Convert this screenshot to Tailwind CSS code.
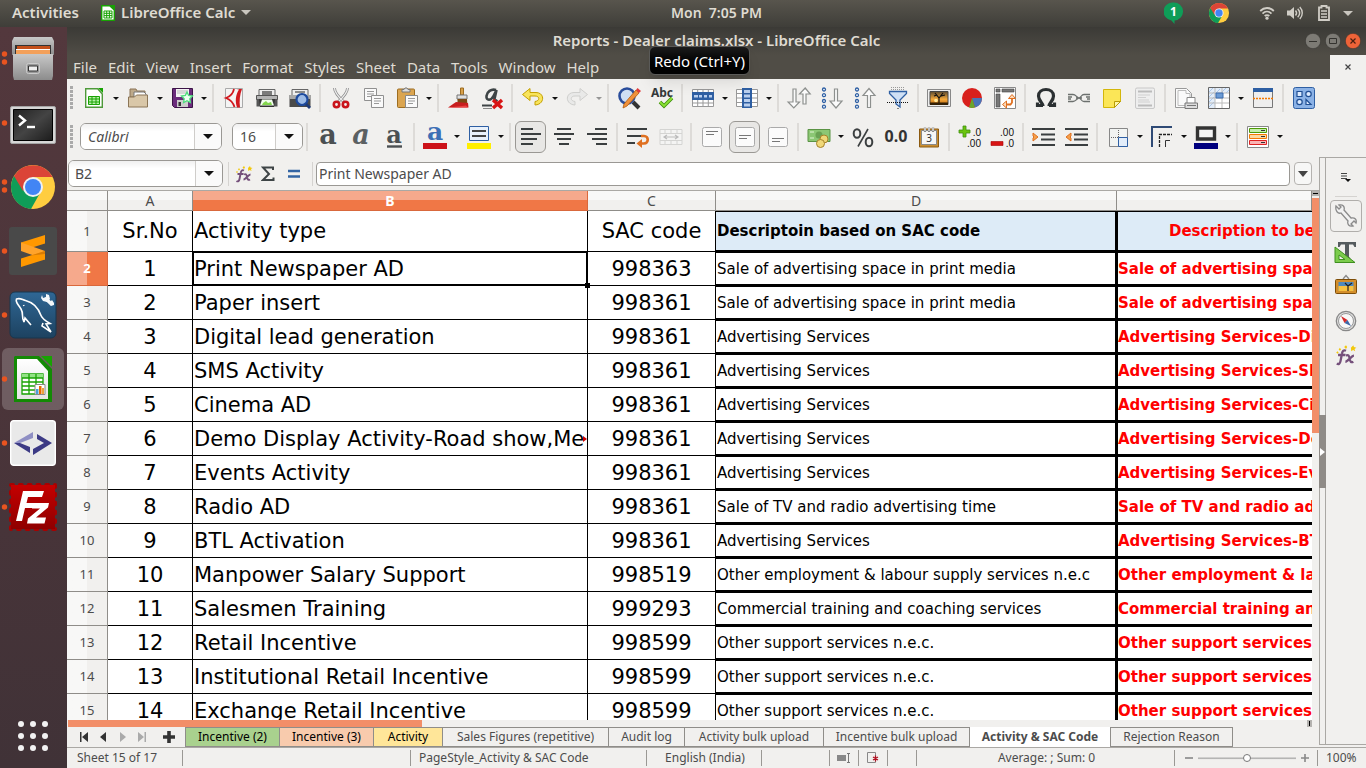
<!DOCTYPE html>
<html lang="en">
<head>
<meta charset="utf-8">
<title>Reports - Dealer claims.xlsx - LibreOffice Calc</title>
<script src="https://cdn.jsdelivr.net/npm/@tailwindcss/browser@4"></script>
</head>
<body class="flex h-screen flex-col overflow-hidden bg-[#f1f0ee] font-['Noto_Sans',sans-serif] text-sm text-[#4c4c4c]">

<!-- shared symbols -->
<svg class="absolute size-0" aria-hidden="true">
  <defs>
    <linearGradient id="gw" x2="0" y2="1"><stop stop-color="#fff"/><stop offset="1" stop-color="#e4e4e4"/></linearGradient>
    <linearGradient id="gf" x2="0" y2="1"><stop stop-color="#c8c8c8"/><stop offset="1" stop-color="#8c8c8c"/></linearGradient>
    <linearGradient id="gt" x2="1" y2="1"><stop stop-color="#222"/><stop offset=".5" stop-color="#444"/><stop offset="1" stop-color="#1c1c1c"/></linearGradient>
    <linearGradient id="gm" x2="0" y2="1"><stop stop-color="#2f6795"/><stop offset="1" stop-color="#1d4260"/></linearGradient>
    <linearGradient id="gs" x2="0" y2="1"><stop stop-color="#5b4a30"/><stop offset=".6" stop-color="#f5a93a"/><stop offset="1" stop-color="#c46a10"/></linearGradient>
    <linearGradient id="gz" x2="0" y2="1"><stop stop-color="#c40000"/><stop offset="1" stop-color="#8f0000"/></linearGradient>
  </defs>
  <symbol id="dn" viewBox="0 0 6 3"><path d="M0 0h6L3 3z" fill="#111"/></symbol>
  <symbol id="big" viewBox="0 0 10 5"><path d="M0 0h10L5 5z" fill="#111"/></symbol>
  <symbol id="grip" viewBox="0 0 3 24"><path d="M1.500 0v24" stroke="#aaa" stroke-width="3" stroke-dasharray="3 1"/></symbol>
  <symbol id="chrome" viewBox="0 0 48 48">
    <circle cx="24" cy="24" r="22" fill="#ffcd40"/>
    <path d="M5 13A22 22 0 0 0 22 46l9-16-7-6z" fill="#0f9d58"/>
    <path d="M43.500 14H24L14 28 5 13A22 22 0 0 1 43.500 14z" fill="#db4437"/>
    <circle cx="24" cy="24" r="10" fill="#f1f1f1"/><circle cx="24" cy="24" r="8" fill="#4285f4"/>
  </symbol>
  <symbol id="fx" viewBox="0 0 18 18">
    <path d="M9 5.500c-2-1-3 .500-3.300 2.500L4.500 14c-.4 2-1.500 3-3 2M2.500 9h6M9 9.500c2-1 2.500 0 3 2.500s1.200 3.500 3 2.500M15.500 9.500c-2 0-5 5-7 5" fill="none" stroke="#75507b" stroke-width="1.900"/>
    <path d="M3 4.500l1-1.500 1 1.500-1 1zM7.500 2.500L9 1l1 1.500L9 4zM13 3l2-2 .5 1.500 2 .5-1.500 1 .5 2-1.700-1-1.500 1zM1 7l1-1 1 1-1 1z" fill="#f2c80c"/>
  </symbol>
</svg>

<!-- desktop panel -->
<header class="flex h-[27px] shrink-0 items-center bg-linear-to-b from-[#58554d] to-[#3f3e39] pb-px text-sm font-semibold text-[#dfdbd2]">
  <div class="flex flex-1 items-center pr-20 text-[15px]">
    <button class="ml-3 w-[68px] text-left">Activities</button>
    <button class="ml-[21px] flex items-center gap-1.5">
      <svg class="h-4 w-3.5" viewBox="0 0 14 16"><path d="M.7.700h8L13.300 5v10.300H.700z" fill="#fff" stroke="#18a303" stroke-width="1.400"/><path d="M9 0h5v5z" fill="#18a303"/><path d="M3 6h8v7H3zM3 8.300h8M3 10.600h8M5.700 6v7M8.400 6v7" fill="#fff" stroke="#18a303"/></svg>
      <span>LibreOffice Calc</span>
      <svg class="h-[5px] w-2.5" viewBox="0 0 10 5"><path d="M0 0h10L5 5z" fill="#c9c6bf"/></svg>
    </button>
  </div>
  <button class="whitespace-pre">Mon  7:05 PM</button>
  <div class="flex flex-1 items-center justify-end pr-[13px]">
    <button class="mr-[25px]" aria-label="Hangouts"><svg class="h-[22px] w-[19px]" viewBox="0 0 19 22"><path d="M9.500.500a9 9 0 0 1 1 18v3.500l-3-3.600A9 9 0 0 1 9.500.500z" fill="#0f9d58"/><text x="9.500" y="14" font-size="12" font-weight="700" fill="#fff" text-anchor="middle">1</text></svg></button>
    <button class="mr-[29px]" aria-label="Chrome"><svg class="size-[22px]"><use href="#chrome"/></svg></button>
    <button class="mr-3" aria-label="Network"><svg class="h-3.5 w-4" viewBox="0 0 16 14" fill="none" stroke="#d0cdc6" stroke-width="1.800"><path d="M1.200 5c4-4 9.600-4 13.600 0M3.500 7.600c2.600-2.600 6.400-2.600 9 0M5.700 10c1.300-1.300 3.300-1.300 4.600 0"/><circle cx="8" cy="12.200" r="1.600" fill="#d0cdc6" stroke="none"/></svg></button>
    <button class="mr-[15px]" aria-label="Volume"><svg class="h-3.5 w-4" viewBox="0 0 16 14"><path d="M0 4.500h3L7 1v12L3 9.500H0z" fill="#d0cdc6"/><path d="M8.500 4.500c1.300 1.500 1.300 3.500 0 5M10.700 2.700c2.300 2.500 2.300 6 0 8.600M12.800 1c3.300 3.500 3.300 8.500 0 12" fill="none" stroke="#d0cdc6" stroke-width="1.400"/></svg></button>
    <button class="mr-[13px]" aria-label="Battery"><svg class="h-4 w-3" viewBox="0 0 12 16"><path d="M1 2.500h2.500V1h5v1.500H11V15H1z" fill="none" stroke="#d0cdc6" stroke-width="1.800"/><path d="M3 6h6M3 9h6M3 12h6" stroke="#d0cdc6" stroke-width="1.700"/></svg></button>
    <button aria-label="System menu"><svg class="h-[5px] w-2.5" viewBox="0 0 10 5"><path d="M0 0h10L5 5z" fill="#c9c6bf"/></svg></button>
  </div>
</header>

<div class="flex min-h-0 flex-1">
  <!-- dock -->
  <nav class="flex w-[67px] shrink-0 flex-col items-center bg-linear-to-b from-[#53383d] via-[#4b353a] to-[#403237] pr-px [&>button]:relative [&>button]:flex [&>button]:size-16 [&>button]:shrink-0 [&>button]:items-center [&>button]:justify-center">
    <button aria-label="Files"><svg class="absolute left-0 top-6 h-3.5 w-2" viewBox="0 0 8 14" fill="#e95420"><circle cx="3.500" cy="3" r="2.700"/><circle cx="3.500" cy="11" r="2.700"/></svg>
      <svg class="h-11 w-[42px]" viewBox="0 0 42 44"><path d="M2 0h38l2 4v14H0V4z" fill="url(#gf)"/><path d="M3 8h36v10H3z" fill="#333"/><path d="M5 9h33v8H5z" fill="#c4501b"/><path d="M4 12h34v6H4z" fill="#f3a05a"/><path d="M4 12.500h34" stroke="#fff" stroke-width="1"/><path d="M1 17h40v22l-1 4H2l-1-4z" fill="url(#gf)"/><rect x="14.500" y="26.500" width="13" height="10" rx="2" fill="#999" stroke="#ccc"/><path d="M16.500 29h9v5h-9z" fill="#eee" stroke="#333"/></svg></button>
    <button class="pt-1" aria-label="Terminal"><svg class="absolute left-0 top-6 h-3.5 w-2" viewBox="0 0 8 14" fill="#e95420"><circle cx="3.500" cy="8" r="2.700"/></svg>
      <svg class="h-[38px] w-[46px]" viewBox="0 0 46 38"><rect x=".5" y=".5" width="45" height="37" rx="1.500" fill="#d6d6d6" stroke="#a5a5a5"/><path d="M3.500 3.500h39v31h-39z" fill="url(#gt)" stroke="#000"/><path d="M9 9.500l6 5-6 5" fill="none" stroke="#fff" stroke-width="2.400"/><path d="M17 21h8" stroke="#fff" stroke-width="2.400"/></svg></button>
    <button aria-label="Chrome"><svg class="absolute left-0 top-6 h-3.5 w-2" viewBox="0 0 8 14" fill="#e95420"><circle cx="3.500" cy="3" r="2.700"/><circle cx="3.500" cy="11" r="2.700"/></svg>
      <svg class="size-12"><use href="#chrome"/></svg></button>
    <button aria-label="Sublime Text"><svg class="absolute left-0 top-6 h-3.5 w-2" viewBox="0 0 8 14" fill="#e95420"><circle cx="3.500" cy="8" r="2.700"/></svg>
      <svg class="size-12" viewBox="0 0 48 48"><rect width="48" height="48" rx="3" fill="#494949"/><path d="M12 15.500L36 8v8.500L12 24z" fill="#ff9800"/><path d="M12 24V15.500L36 24v8.500z" fill="#ffa32b"/><path d="M12 31.500L36 24v8.500L12 40z" fill="#ff9800"/><path d="M22 28.500L36 24v3z" fill="#d97c05"/></svg></button>
    <button aria-label="MySQL Workbench"><svg class="absolute left-0 top-6 h-3.5 w-2" viewBox="0 0 8 14" fill="#e95420"><circle cx="3.500" cy="8" r="2.700"/></svg>
      <svg class="size-12" viewBox="0 0 48 48"><rect x="1" y="1" width="46" height="46" rx="5" fill="url(#gm)" stroke="#19364e"/><path d="M15 31c-3-5 0-8-3-13C9 13 6 11 7.500 8c4-1.500 6 1 9 1.500 8 2 13 8 15.500 15 1 3 4 5 9 8l-4 .500 5 8-9-6 1-3M15 31l1-4 6 7M14.500 14l.500 1" fill="none" stroke="#fff" stroke-width="1.600"/><path d="M36 7l7 6.500" stroke="#f4f8fb" stroke-width="3.600"/><path d="M33 4l1 3 3-1V3l3 1 1 4-3 3-4-1-2-3zM40 12l3-3 2 3v2l-3 1z" fill="#f4f8fb"/></svg></button>
    <button aria-label="LibreOffice Calc"><span class="absolute inset-px rounded-md bg-white/20"></span><svg class="absolute left-0 top-6 h-3.5 w-2" viewBox="0 0 8 14" fill="#e95420"><circle cx="3.500" cy="8" r="2.700"/></svg>
      <svg class="relative h-12 w-10" viewBox="0 0 40 48"><path d="M2 1h24l13 13v33H1V2z" fill="#138a05"/><path d="M28 1h11v11z" fill="#18a303"/><path d="M4 4h20l11 12v28H4z" fill="url(#gw)"/><path d="M9 19h21v20H9z" fill="#fff" stroke="#18a303" stroke-width="1.300"/><path d="M9 19h21v4H9z" fill="#92e285"/><path d="M9 23h21M9 27h21M9 31h21M9 35h21M16 19v20M23 19v20" stroke="#18a303" stroke-width="1.300"/><path d="M22 29.500h10v10H22z" fill="#fff" stroke="#888"/><path d="M23 34h2.500v5H23z" fill="#4a9fd8"/><path d="M26 31h2.500v8H26z" fill="#e66a00"/><path d="M29 33h2v6h-2z" fill="#e8a33d"/></svg></button>
    <button aria-label="Code editor"><svg class="absolute left-0 top-6 h-3.5 w-2" viewBox="0 0 8 14" fill="#e95420"><circle cx="3.500" cy="8" r="2.700"/></svg>
      <svg class="size-[46px]" viewBox="0 0 46 46"><rect x=".7" y=".7" width="44.600" height="44.600" rx="3" fill="#e9e9e9" stroke="#fff" stroke-width="1.400"/><path d="M4 23L23 12v6l-13 5z" fill="#8f8fc4"/><path d="M4 23l6 0 10 4v6z" fill="#3c3a85"/><path d="M27 14l15 9-19 12v-6l11-6-7-4z" fill="#3c3a85"/></svg></button>
    <button aria-label="FileZilla"><svg class="absolute left-0 top-6 h-3.5 w-2" viewBox="0 0 8 14" fill="#e95420"><circle cx="3.500" cy="8" r="2.700"/></svg>
      <svg class="size-12" viewBox="0 0 48 48"><rect x="2" y="2" width="44" height="44" fill="none" stroke="#a80000" stroke-width="4" stroke-linecap="round" stroke-dasharray="2 6.800"/><rect x="2" y="2" width="44" height="44" fill="url(#gz)"/><path d="M14 8h21l-2 6H19l-1.500 6h10l-1.500 5H16l-3 13H7z" fill="#fff"/><path d="M24 20h16l-1 4.500-12 10h10l-1.500 6H18l1-5 12-10H23z" fill="#fff"/></svg></button>
    <button class="mt-auto" aria-label="Show applications"><svg class="size-8" viewBox="0 0 32 32" fill="#f2f2f2"><circle cx="4" cy="4" r="3"/><circle cx="16" cy="4" r="3"/><circle cx="28" cy="4" r="3"/><circle cx="4" cy="16" r="3"/><circle cx="16" cy="16" r="3"/><circle cx="28" cy="16" r="3"/><circle cx="4" cy="28" r="3"/><circle cx="16" cy="28" r="3"/><circle cx="28" cy="28" r="3"/></svg></button>
  </nav>

  <main class="flex min-w-0 flex-1 flex-col">
    <!-- title bar -->
    <div class="relative flex h-7 shrink-0 items-center justify-center bg-linear-to-b from-[#3b3a36] to-[#504d46]">
      <h1 class="text-[15px] font-semibold text-[#dfdbd2]">Reports - Dealer claims.xlsx - LibreOffice Calc</h1>
      <div class="absolute right-[5px] flex gap-1">
        <button aria-label="Minimize"><svg class="size-4" viewBox="0 0 16 16"><circle cx="8" cy="8" r="7.700" fill="#7d7b75" stroke="#34332f" stroke-width=".6"/><path d="M4 8.500h8" stroke="#34332f"/></svg></button>
        <button aria-label="Maximize"><svg class="size-4" viewBox="0 0 16 16"><circle cx="8" cy="8" r="7.700" fill="#7d7b75" stroke="#34332f" stroke-width=".6"/><path d="M4.500 5.500h7v5h-7z" fill="none" stroke="#34332f"/></svg></button>
        <button aria-label="Close"><svg class="size-4" viewBox="0 0 16 16"><circle cx="8" cy="8" r="7.700" fill="#ee6338" stroke="#34332f" stroke-width=".6"/><path d="M5.500 5.500l5 5M10.500 5.500l-5 5" stroke="#4a1f10" stroke-width="1.200"/></svg></button>
      </div>
      <div role="tooltip" class="absolute left-[582px] top-[19px] z-10 rounded-md border border-[#5a5a58] bg-linear-to-b from-[#1c1c1c] to-black px-1 pb-0.5 pt-[3px] text-[15px] leading-[22px] text-white shadow-lg">Redo (Ctrl+Y)</div>
    </div>
    <!-- menu bar -->
    <div class="flex h-6 shrink-0 items-center justify-between bg-[#504d46] pl-1.5">
      <div class="flex gap-[11px] pt-0.5 text-[15px] text-[#dfdbd2]" role="menubar">
        <button>File</button><button>Edit</button><button>View</button><button>Insert</button><button>Format</button><button>Styles</button><button>Sheet</button><button>Data</button><button>Tools</button><button>Window</button><button>Help</button>
      </div>
      <button class="flex h-6 w-9 items-center justify-center bg-[#f1f0ee]" aria-label="Close document"><svg class="size-1.5" viewBox="0 0 6 6"><path d="M.5.500l5 5M5.500.500l-5 5" stroke="#444" stroke-width="1.200"/></svg></button>
    </div>

    <!-- standard toolbar -->
    <div role="toolbar" aria-label="Standard" class="flex h-[39px] shrink-0 items-center overflow-hidden pb-px pl-[3px] [&>button]:flex [&>button]:h-8 [&>button]:w-[33px] [&>button]:shrink-0 [&>button]:items-center [&>button]:justify-center [&>button>svg]:size-6 [&>button>svg]:overflow-visible [&>button[data-drop]]:w-[11px] [&>button[data-drop]>svg]:h-[3px] [&>button[data-drop]>svg]:w-1.5 [&>hr]:mx-[3px] [&>hr]:h-7 [&>hr]:w-0.5 [&>hr]:shrink-0 [&>hr]:border-0 [&>hr]:bg-[#dddbd8]">
      <svg class="mr-1 h-6 w-[3px] shrink-0"><use href="#grip"/></svg>
      <button aria-label="New"><svg viewBox="0 0 24 24"><path d="M3.700 2.700h12L20.300 8v13.300H3.700z" fill="#fff" stroke="#4e9a3a" stroke-width="1.400"/><path d="M16 2h5v5z" fill="#18a303"/><path d="M6.500 10.500h11v8h-11zM6.500 13h11M6.500 16h11M10 10.500v8M14 10.500v8" fill="#b7f0a8" stroke="#18a303"/></svg></button>
      <button data-drop aria-label="New options"><svg><use href="#dn"/></svg></button>
      <button aria-label="Open"><svg viewBox="0 0 24 24"><path d="M4 3h6l1 2h8v6H4z" fill="#bda98a" stroke="#8b7556"/><path d="M8 6h10l2 2v6H8z" fill="#fff" stroke="#777"/><path d="M2.500 11h6l2-2h11v12h-19z" fill="#d9c7a8" stroke="#8b7556"/></svg></button>
      <button data-drop aria-label="Open options"><svg><use href="#dn"/></svg></button>
      <button aria-label="Save"><svg viewBox="0 0 24 24"><path d="M2.500 2.500h20v19h-18l-2-2z" fill="#6b2c7c" stroke="#3c1447"/><path d="M6 3h13v8H6z" fill="#f4f4f4"/><path d="M7 5h11M7 7h11" stroke="#bbb"/><path d="M7 14h11v7H7z" fill="#ccc"/><path d="M8.500 16h2.500v4H8.500z" fill="#333"/><path d="M17 6l1.600 3.400 3.900.600-2.700 2.700.6 3.800-3.400-1.800-3.400 1.800.6-3.800L11.500 10l3.900-.6z" fill="#effff2" stroke="#4fdd7d" stroke-width="1.300"/></svg></button>
      <button data-drop aria-label="Save options"><svg><use href="#dn"/></svg></button>
      <hr>
      <button aria-label="Export as PDF"><svg viewBox="0 0 24 24"><path d="M3.500 2.500h17v19h-17z" fill="#f4f4f4" stroke="#aaa"/><path d="M12 3c-1 5-4 7.500-8 9 4 1.500 7 4 8.500 9" fill="none" stroke="#d2191f" stroke-width="1.800"/><path d="M14.500 3h5.500c-2 5-3 12-2 18.500h-3C13 15 13.500 9 17 3.500z" fill="#d2191f"/></svg></button>
      <button aria-label="Print"><svg viewBox="0 0 24 24"><path d="M4 3.500h16v7H4z" fill="#eee" stroke="#666"/><path d="M7 6h10M7 8h10" stroke="#555" stroke-width="1.300"/><path d="M1.500 9.500h4v4h13v-4h4v11h-21z" fill="#555"/><path d="M1.500 9.500h21v4h-21z" fill="#b4b4b4" stroke="#555"/><path d="M4 13h16l-1 8H5z" fill="#333"/><path d="M7 13.500h10l2 6H5z" fill="#f4fff0"/><path d="M8 17l3-2 2 2 3-1 1 3H7z" fill="#83d64e"/></svg></button>
      <button aria-label="Print preview"><svg viewBox="0 0 24 24"><path d="M4 3.500h16v7H4z" fill="#eee" stroke="#666"/><path d="M7 6h10" stroke="#555" stroke-width="1.300"/><path d="M1.500 9h21v12h-21z" fill="#4a4a4a"/><path d="M1.500 9h21v4h-21z" fill="#a8a8a8"/><circle cx="14" cy="13.500" r="5.500" fill="#9dbbe6" stroke="#1d4a9e" stroke-width="2.200"/><path d="M18 18l4 4" stroke="#1d3a78" stroke-width="2.800"/></svg></button>
      <hr>
      <button aria-label="Cut"><svg viewBox="0 0 24 24"><path d="M5.500 2c0 3 4 9 9.500 14M18.500 2c0 3-4 9-9.500 14" fill="none" stroke="#8a8a8a" stroke-width="2.800"/><path d="M5.500 2c0 3 4 9 9.500 14M18.500 2c0 3-4 9-9.500 14" fill="none" stroke="#eee" stroke-width="1.300"/><circle cx="7.500" cy="18.500" r="2.700" fill="none" stroke="#c9141b" stroke-width="2.600"/><circle cx="16.500" cy="18.500" r="2.700" fill="none" stroke="#c9141b" stroke-width="2.600"/></svg></button>
      <button aria-label="Copy"><svg viewBox="0 0 24 24"><path d="M2.500 2.500h12v12h-12z" fill="#fafafa" stroke="#909090"/><path d="M5 5.500h7M5 8h7M5 10.500h5" stroke="#999"/><path d="M9.500 9.500h12v12h-12z" fill="#fafafa" stroke="#909090"/><path d="M12 12.500h7M12 15h7M12 17.500h5" stroke="#999"/></svg></button>
      <button aria-label="Paste"><svg viewBox="0 0 24 24"><rect x="2.500" y="3" width="17" height="18.500" rx="1" fill="#dba550" stroke="#9d6d20"/><path d="M7 6V3.500h2L10 2h2l1 1.500h2V6z" fill="#ddd" stroke="#777"/><path d="M10.500 9.500h12v12h-12z" fill="#fafafa" stroke="#888"/><path d="M13 12.500h7M13 15h7M13 17.500h5" stroke="#999"/></svg></button>
      <button data-drop aria-label="Paste options"><svg><use href="#dn"/></svg></button>
      <hr>
      <button aria-label="Clone formatting"><svg viewBox="0 0 24 24"><path d="M13.500 2h3v7h-3z" fill="#d8a04a" stroke="#9d6d20"/><path d="M10 9h10v4H10z" fill="#e0e0e0" stroke="#777"/><path d="M10.500 13h9.500l.5 7-10 1z" fill="#7c4a14"/><path d="M9 16l12 1 .5 4.500H1z" fill="#c81e1e"/><path d="M1 21.500h20l-2-2-8 1z" fill="#ee4444"/></svg></button>
      <button aria-label="Clear formatting"><svg viewBox="0 0 24 24"><path d="M16 4c-5-1.500-9 2-9.500 6-.5 5 4.500 5 7 0l3-6-2 9c-.3 2 1 2.500 3 1" fill="none" stroke="#3e4446" stroke-width="2.600"/><path d="M2 19.500h10" stroke="#3e4446" stroke-width="2"/><path d="M3 22.500h9" stroke="#888"/><path d="M13 14l9 8M22 14l-9 8" stroke="#d81414" stroke-width="3.400"/></svg></button>
      <hr>
      <button aria-label="Undo"><svg viewBox="0 0 24 24"><path d="M9 2.500v4h6c9 0 9 12-1 12.500v-3.500c5-.5 5-5.500 0-5.500H9v4.500L1.500 8.500z" fill="#f8e45c" stroke="#c4a000"/></svg></button>
      <button data-drop aria-label="Undo list"><svg><use href="#dn"/></svg></button>
      <button aria-label="Redo"><svg viewBox="0 0 24 24"><path d="M15 2.500v4H9C0 6.500 0 18.500 10 19v-3.500c-5-.5-5-5.500 0-5.500h5v4.500l7.500-6z" fill="#e9e9e8" stroke="#cfcfcd"/></svg></button>
      <button data-drop aria-label="Redo list"><svg class="opacity-40"><use href="#dn"/></svg></button>
      <hr>
      <button aria-label="Find and replace"><svg viewBox="0 0 24 24"><path d="M16 16l6 6" stroke="#333" stroke-width="4"/><circle cx="10" cy="10" r="7.500" fill="#cfdef3" stroke="#2a4d9b" stroke-width="2.600"/><path d="M6 22l1-4L19 4l3 3L10 20z" fill="#f0913a" stroke="#b35b0d" stroke-width=".8"/><path d="M19 4l1.500-2 3.500 3-2 2z" fill="#e03c3c"/></svg></button>
      <button aria-label="Spelling"><svg viewBox="0 0 24 24"><text x="12" y="11" font-size="12" font-weight="700" fill="#34393b" text-anchor="middle">Abc</text><path d="M10 16l4 4L22 12" fill="none" stroke="#3f8f0f" stroke-width="3.600"/><path d="M10 16l4 4L22 12" fill="none" stroke="#8ae234" stroke-width="1.800"/></svg></button>
      <hr>
      <button aria-label="Rows"><svg viewBox="0 0 24 24"><path d="M1.500 3.500h21v17h-21zM1.500 17h21M6.700 3v17M12 3v17M17.300 3v17" fill="#fff" stroke="#999"/><path d="M1 6h22v8H1z" fill="#2e5fa3"/><path d="M3 9h4v2.500H3zM8 9h3v2.500H8zM13 9h3v2.500h-3zM18 9h3v2.500h-3z" fill="#b9cfee"/></svg></button>
      <button data-drop aria-label="Row options"><svg><use href="#dn"/></svg></button>
      <button aria-label="Columns"><svg viewBox="0 0 24 24"><path d="M1.500 3.500h21v17h-21zM1 7.500h22M1 12h22M1 16.500h22" fill="#fff" stroke="#999"/><path d="M7 2h10v20H7z" fill="#2e5fa3"/><path d="M9 4h6v3H9zM9 8.500h6v3H9zM9 13h6v3H9zM9 17.500h6v3H9z" fill="#b9cfee"/></svg></button>
      <button data-drop aria-label="Column options"><svg><use href="#dn"/></svg></button>
      <hr>
      <button aria-label="Sort"><svg viewBox="0 0 24 24" fill="#fbfbfb" stroke="#8d908e" stroke-width="1.200"><path d="M6 3h3v13h3.500l-5.700 6-5.700-6H6zM16 18V8h-3.500l5.700-6 5 6H19v10z"/></svg></button>
      <button aria-label="Sort descending"><svg viewBox="0 0 24 24"><path d="M14.500 3h3v12H22l-6 7-6-7h4.500z" fill="#fbfbfb" stroke="#8d908e" stroke-width="1.200"/><g fill="#fff" stroke="#2e5fa3" stroke-width="1.300"><circle cx="4" cy="3.500" r="1.500"/><circle cx="4" cy="9.200" r="1.500"/><circle cx="4" cy="15" r="1.500"/><circle cx="4" cy="20.700" r="1.500"/></g></svg></button>
      <button aria-label="Sort ascending"><svg viewBox="0 0 24 24"><path d="M14.500 21.500h3v-12H22l-6-7-6 7h4.500z" fill="#fbfbfb" stroke="#8d908e" stroke-width="1.200"/><g fill="#fff" stroke="#2e5fa3" stroke-width="1.300"><circle cx="4" cy="3.500" r="1.500"/><circle cx="4" cy="9.200" r="1.500"/><circle cx="4" cy="15" r="1.500"/><circle cx="4" cy="20.700" r="1.500"/></g></svg></button>
      <button aria-label="AutoFilter"><svg viewBox="0 0 24 24"><path d="M5 1.500h14M5 3.500h14" stroke="#999" stroke-dasharray="1 1"/><path d="M3.500 5.500h17v2L14 14v7l-4-3v-4L3.500 7.500z" fill="#cfe0f5" stroke="#2e5fa3" stroke-width="1.300"/><path d="M1 16.500h22" stroke="#111" stroke-dasharray="1 1"/><path d="M12 22v1" stroke="#111"/></svg></button>
      <hr>
      <button aria-label="Insert image"><svg viewBox="0 0 24 24"><path d="M.5 3.500h23v17H.5z" fill="#eee" stroke="#888"/><path d="M3 5.500h18v13H3z" fill="url(#gs)" stroke="#444"/><path d="M12 18v-6L8 7M12 12l4-5M14 10l4-1M10 9L7 10" fill="none" stroke="#111" stroke-width="1.200"/><circle cx="9" cy="14.500" r="1.800" fill="#ffe89a"/><path d="M3 16.500h18v2.500H3z" fill="#332005"/></svg></button>
      <button aria-label="Insert chart"><svg viewBox="0 0 24 24"><circle cx="12" cy="12" r="10" fill="#d8201c"/><path d="M12 12h10a10 10 0 0 1-7 9.600z" fill="#4a74b8"/><path d="M12 12l3 9.600a10 10 0 0 1-6 0z" fill="#69a62c"/></svg></button>
      <button aria-label="Insert pivot table"><svg viewBox="0 0 24 24"><path d="M1.500 1.500h21v21h-21z" fill="#fff" stroke="#888"/><path d="M3 3h4v3H3zM9 3h12v3H9zM3 8h4v13H3z" fill="#777" stroke="#444" stroke-width=".6"/><path d="M13 18.500h4.500l1.500-2V12" fill="none" stroke="#df7020" stroke-width="1.800"/><path d="M9.500 18.500l4-3.500v7zM15.500 12.500l3.500-4 3.500 4z" fill="#fbd9b8" stroke="#df7020"/></svg></button>
      <hr>
      <button aria-label="Special character"><svg viewBox="0 0 24 24"><path d="M9 19.500H3.500v-3M9 20c0-3-4.500-5-4.500-10C4.500 6 8 3.500 12 3.500S19.500 6 19.500 10c0 5-4.500 7-4.500 10M15 19.500h5.500v-3" fill="none" stroke="#2b3032" stroke-width="3.200"/></svg></button>
      <button aria-label="Hyperlink"><svg viewBox="0 0 24 24" fill="none" stroke="#6c706e" stroke-width="1.300"><path d="M1 8.500h5c3 0 3 2.500 6 3.500s2 3.500 5 3.500h6M1 15.500h5c3 0 3-2.500 6-3.500s2-3.500 5-3.500h6M9 12h6M1 11h4M1 13h3M19 11h4M20 13h3"/></svg></button>
      <button aria-label="Comment"><svg viewBox="0 0 24 24"><path d="M3.500 3.500h17v12l-6 6h-11z" fill="#fbe657" stroke="#d3b60b"/><path d="M20.500 15.500h-6v6z" fill="#fff6a8" stroke="#b89c05"/></svg></button>
      <button aria-label="Headers and footers"><svg viewBox="0 0 24 24"><rect x="2.500" y="2" width="19" height="20.500" rx="1.500" fill="#eee" stroke="#c8c8c8"/><path d="M5 5.500h14M5 19.500h14" stroke="#bbb" stroke-width="2"/><path d="M5 9h12M5 11.500h8M5 14h11M5 16h12" stroke="#d0d0d0"/></svg></button>
      <hr>
      <button aria-label="Print area"><svg viewBox="0 0 24 24"><path d="M1.500 2.500h11l5 5v14h-16z" fill="#fafafa" stroke="#999"/><path d="M4 4.500h8v3h4v12H4z" fill="none" stroke="#bbb"/><path d="M13 11.500h8v6h-8z" fill="#fff" stroke="#888"/><path d="M11 17h12.500v5.500H11z" fill="#ddd" stroke="#777"/><path d="M13 19.500h9" stroke="#777"/></svg></button>
      <button aria-label="Freeze rows and columns"><svg viewBox="0 0 24 24"><path d="M1.500 1.500h21v21h-21z" fill="#fff" stroke="#666"/><path d="M2 2h20v5H2zM2 7h6v15H2z" fill="#e3edf9"/><path d="M2 6l4-4M2 11l5-5M2 16l5-5M2 21l5-5M9 7l4-4M14 7l5-5M19 7l3-3" stroke="#9dbce4" stroke-width=".8"/><path d="M2 7h20M2 12h20M2 17h20M8 2v20M15 2v20" stroke="#bbb"/><path d="M9 7h7v5H9z" fill="#6b9bd6" stroke="#3c6cae"/></svg></button>
      <button data-drop aria-label="Freeze options"><svg><use href="#dn"/></svg></button>
      <button aria-label="Split window"><svg viewBox="0 0 24 24"><path d="M2.500 2.500h19v19h-19z" fill="#eee" stroke="#777"/><path d="M2 2h20v4H2z" fill="#2e5fa3"/><path d="M2 12.500h20" stroke="#f57900" stroke-width="1.300" stroke-dasharray="2 1"/></svg></button>
      <hr>
      <button aria-label="Show draw functions"><svg viewBox="0 0 24 24"><rect x="1.500" y="1.500" width="21" height="21" rx="2" fill="#8bb2e6" stroke="#2e5fa3"/><g fill="#dcebff" stroke="#1f4e93" stroke-width="1.200"><path d="M5 5.500h5v5H5z"/><circle cx="16.500" cy="8" r="2.700"/><circle cx="7.500" cy="16" r="2.700"/><path d="M14 13.500v5h5z"/></g></svg></button>
    </div>

    <!-- formatting toolbar -->
    <div role="toolbar" aria-label="Formatting" class="flex h-[39px] shrink-0 items-center overflow-hidden pb-0.5 pl-[3px] [&>button]:flex [&>button]:h-8 [&>button]:w-[33px] [&>button]:shrink-0 [&>button]:items-center [&>button]:justify-center [&>button>svg]:size-6 [&>button>svg]:overflow-visible [&>button[data-drop]]:w-[11px] [&>button[data-drop]>svg]:h-[3px] [&>button[data-drop]>svg]:w-1.5 [&>button[aria-pressed]]:w-[31px] [&>button[aria-pressed]]:mx-px [&>button[aria-pressed]]:rounded-md [&>button[aria-pressed]]:border [&>button[aria-pressed]]:border-[#9a9894] [&>button[aria-pressed]]:bg-[#e8e7e5] [&>hr]:mx-[3px] [&>hr]:h-7 [&>hr]:w-0.5 [&>hr]:shrink-0 [&>hr]:border-0 [&>hr]:bg-[#dddbd8]">
      <svg class="mr-[7px] h-6 w-[3px] shrink-0"><use href="#grip"/></svg>
      <div class="mr-2.5 flex h-[27px] w-[142px] shrink-0 overflow-hidden rounded-md border border-[#9a9894] bg-white">
        <input aria-label="Font name" value="Calibri" class="w-28 min-w-0 flex-1 bg-linear-to-b from-[#f0f0f0] to-white to-30% pl-[7px] italic outline-none">
        <button aria-label="Font list" class="flex w-[27px] items-center justify-center border-l border-[#cfcdca] bg-[#fafafa]"><svg class="h-[5px] w-2.5"><use href="#big"/></svg></button>
      </div>
      <div class="flex h-[27px] w-[71px] shrink-0 overflow-hidden rounded-md border border-[#9a9894] bg-white">
        <input aria-label="Font size" value="16" class="w-10 min-w-0 flex-1 bg-linear-to-b from-[#f0f0f0] to-white to-30% pl-[7px] outline-none">
        <button aria-label="Font size list" class="flex w-[27px] items-center justify-center border-l border-[#cfcdca] bg-[#fafafa]"><svg class="h-[5px] w-2.5"><use href="#big"/></svg></button>
      </div>
      <hr>
      <button aria-label="Bold"><svg viewBox="0 0 24 24"><text x="12" y="19" font-family="DejaVu Serif" font-size="27" font-weight="700" fill="#4b5052" text-anchor="middle">a</text></svg></button>
      <button aria-label="Italic"><svg viewBox="0 0 24 24"><text x="12" y="19" font-family="DejaVu Serif" font-size="27" font-weight="700" font-style="italic" fill="#5b6062" text-anchor="middle">a</text></svg></button>
      <button aria-label="Underline"><svg viewBox="0 0 24 24"><text x="12" y="18" font-family="DejaVu Serif" font-size="24" font-weight="700" fill="#4b5052" text-anchor="middle">a</text><path d="M5 21.500h15" stroke="#4b5052" stroke-width="2.400"/></svg></button>
      <hr>
      <button aria-label="Font color"><svg viewBox="0 0 24 24"><text x="12" y="15" font-family="DejaVu Serif" font-size="25" font-weight="700" fill="#3c6fb5" text-anchor="middle">a</text><path d="M0 18h24v6H0z" fill="#cc1219"/></svg></button>
      <button data-drop aria-label="Font colors"><svg><use href="#dn"/></svg></button>
      <button aria-label="Highlighting"><svg viewBox="0 0 24 24"><path d="M2.500 1.500h19v14h-19z" fill="#e9f1fb" stroke="#2e5fa3"/><path d="M5 6h14M5 11h14" stroke="#444" stroke-width="2"/><path d="M0 18h24v6H0z" fill="#ffef00"/></svg></button>
      <button data-drop aria-label="Highlighting colors"><svg><use href="#dn"/></svg></button>
      <hr>
      <button aria-label="Align left" aria-pressed="true"><svg viewBox="0 0 24 24"><path d="M2 4h12M2 9h20M2 14h16M2 19h12" stroke="#3b3f40" stroke-width="2"/></svg></button>
      <button aria-label="Center"><svg viewBox="0 0 24 24"><path d="M5 4h14M2 9h20M5 14h14M7 19h10" stroke="#3b3f40" stroke-width="2"/></svg></button>
      <button aria-label="Align right"><svg viewBox="0 0 24 24"><path d="M10 4h12M2 9h20M7 14h15M11 19h11" stroke="#3b3f40" stroke-width="2"/></svg></button>
      <hr>
      <button aria-label="Wrap text"><svg viewBox="0 0 24 24"><path d="M1 4h20M1 11h14M1 18h8" stroke="#3b3f40" stroke-width="2"/><path d="M15 11h3c5 0 5 7.500 0 7.500h-3" fill="none" stroke="#df7020" stroke-width="2.600"/><path d="M10.500 18.500l5.500-4.500v9z" fill="#df7020"/></svg></button>
      <button aria-label="Merge cells"><svg viewBox="0 0 24 24"><path d="M1 4.500h22v15H1zM1 8.500h22M1 15.500h22M6 4v4M12 4v4M18 4v4M6 16v4M12 16v4M18 16v4" fill="#f4f4f3" stroke="#d4d4d2"/><path d="M6 12h12M8 10l-3 2 3 2M16 10l3 2-3 2" fill="none" stroke="#bbb" stroke-width="1.200"/></svg></button>
      <hr>
      <button aria-label="Align top"><svg viewBox="0 0 24 24"><rect x="2.500" y="2.500" width="19" height="19" rx="2" fill="#fbfbfb" stroke="#aaa"/><path d="M6 6.500h12M6 9.500h8" stroke="#777"/></svg></button>
      <button aria-label="Center vertically" aria-pressed="true"><svg viewBox="0 0 24 24"><rect x="2.500" y="2.500" width="19" height="19" rx="2" fill="#fbfbfb" stroke="#aaa"/><path d="M6 10.500h12M6 13.500h8" stroke="#777"/></svg></button>
      <button aria-label="Align bottom"><svg viewBox="0 0 24 24"><rect x="2.500" y="2.500" width="19" height="19" rx="2" fill="#fbfbfb" stroke="#aaa"/><path d="M6 13.500h12M6 16.500h8" stroke="#777"/></svg></button>
      <hr>
      <button aria-label="Currency"><svg viewBox="0 0 24 24"><path d="M1 4.500h22v12H1z" fill="#8cc774" stroke="#5a9344"/><circle cx="12" cy="10" r="3.500" fill="#6aa253"/><path d="M3 7h4M3 13h4" stroke="#c5e8b5" stroke-width="1.500"/><circle cx="17" cy="14" r="4" fill="#f0d878" stroke="#a5822a"/><circle cx="13.500" cy="18.500" r="4" fill="#f0d878" stroke="#a5822a"/></svg></button>
      <button data-drop aria-label="Currency list"><svg><use href="#dn"/></svg></button>
      <button aria-label="Percent"><svg viewBox="0 0 24 24"><g fill="none" stroke="#3b3f40"><ellipse cx="6" cy="8.500" rx="3.300" ry="4.300" stroke-width="2"/><ellipse cx="18" cy="17" rx="3.300" ry="4.300" stroke-width="2"/><path d="M17 4L7 21.500" stroke-width="1.600"/></g></svg></button>
      <button aria-label="Number"><svg viewBox="0 0 24 24"><text x="12" y="17" font-size="16" font-weight="700" fill="#333" text-anchor="middle">0.0</text></svg></button>
      <button aria-label="Date"><svg viewBox="0 0 24 24"><path d="M2.500 4h19v18h-19z" fill="#c98d30" stroke="#8c5a10"/><path d="M4.500 5.500h15v14h-15z" fill="#f6f6f6" stroke="#888"/><path d="M8 2v5M12 2v5M16 2v5" stroke="#888" stroke-width="2.200"/><path d="M8 2v4M12 2v4M16 2v4" stroke="#fff"/><text x="12" y="17" font-size="10" fill="#333" text-anchor="middle">3</text></svg></button>
      <hr>
      <button aria-label="Add decimal place"><svg viewBox="0 0 24 24" font-family="Liberation Sans" font-size="10" fill="#111"><path d="M5 1h3v4h4v3H8v4H5V8H1V5h4z" fill="#6ac40e" stroke="#3f8f0f" stroke-width=".8"/><text x="23" y="11" text-anchor="end">.0</text><text x="23" y="22" text-anchor="end">.00</text></svg></button>
      <button aria-label="Delete decimal place"><svg viewBox="0 0 24 24" font-family="Liberation Sans" font-size="10" fill="#111"><path d="M0 16.500h12v4H0z" fill="#d81414" stroke="#a00" stroke-width=".6"/><text x="23" y="11" text-anchor="end">.00</text><text x="23" y="22" text-anchor="end">.0</text></svg></button>
      <hr>
      <button aria-label="Increase indent"><svg viewBox="0 0 24 24"><path d="M0 4h23M9 9.500h14M9 14.500h14M0 20h23" stroke="#3b3f40" stroke-width="2"/><path d="M1 8l5 4-5 4v-3l1-1-1-1z" fill="#f5a04a" stroke="#df7020"/></svg></button>
      <button aria-label="Decrease indent"><svg viewBox="0 0 24 24"><path d="M0 4h23M9 9.500h14M9 14.500h14M0 20h23" stroke="#3b3f40" stroke-width="2"/><path d="M6 8l-5 4 5 4v-3l-1-1 1-1z" fill="#f5a04a" stroke="#df7020"/></svg></button>
      <hr>
      <button aria-label="Borders"><svg viewBox="0 0 24 24"><path d="M3.500 3.500h18v18h-18z" fill="#f2f4f2" stroke="#888"/><path d="M12.500 5v16M5 12.500h16" stroke="#666" stroke-dasharray="1 1"/><path d="M12.500 12.500h9v9h-9z" fill="#e2edfa" stroke="#2e5fa3"/></svg></button>
      <button data-drop aria-label="Border options"><svg><use href="#dn"/></svg></button>
      <button aria-label="Border style"><svg viewBox="0 0 24 24"><path d="M2 22V2h20" fill="none" stroke="#2f4a75" stroke-width="2"/><path d="M9.500 22V9.500H22" fill="none" stroke="#222" stroke-width="1.300" stroke-dasharray="3 1"/><path d="M15.500 22v-6.500H20" fill="none" stroke="#333"/></svg></button>
      <button data-drop aria-label="Border styles"><svg><use href="#dn"/></svg></button>
      <button aria-label="Border color"><svg viewBox="0 0 24 24"><path d="M3.500 3h17v11h-17z" fill="#f5f5f5" stroke="#333" stroke-width="3.400"/><path d="M0 18h24v6H0z" fill="#00007f"/></svg></button>
      <button data-drop aria-label="Border colors"><svg><use href="#dn"/></svg></button>
      <hr>
      <button aria-label="Conditional formatting"><svg viewBox="0 0 24 24"><path d="M1.500 1.500h21v21h-21z" fill="#fff" stroke="#888"/><path d="M3.500 3.500h17v4h-17z" fill="#c6efae" stroke="#4e9a06"/><path d="M3.500 9.500h17v4h-17z" fill="#fcd9a0" stroke="#f57900"/><path d="M3.500 15.500h17v4h-17z" fill="#f9b4b4" stroke="#dd2222"/><path d="M15 5.500h4M15 11.500h4M15 17.500h4" stroke="#333"/></svg></button>
      <button data-drop aria-label="Conditional options"><svg><use href="#dn"/></svg></button>
    </div>

    <div class="flex min-h-0 flex-1">
      <div class="flex min-w-0 flex-1 flex-col">
        <!-- formula bar -->
        <div class="flex h-[34px] shrink-0 items-center border-b border-[#aaa8a4] pl-px pr-[7px]">
          <div class="flex h-[27px] w-[155px] shrink-0 overflow-hidden rounded-md border border-[#9a9894] bg-white">
            <input aria-label="Name box" value="B2" class="w-28 min-w-0 flex-1 bg-linear-to-b from-[#f0f0f0] to-white to-30% pl-1.5 outline-none">
            <button aria-label="Name list" class="flex w-[27px] items-center justify-center border-l border-[#cfcdca] bg-[#fafafa]"><svg class="h-[5px] w-2.5"><use href="#big"/></svg></button>
          </div>
          <div class="ml-[5px] h-6 w-px bg-[#d5d3d0]"></div>
          <button class="ml-1.5" aria-label="Function wizard"><svg class="size-[18px]"><use href="#fx"/></svg></button>
          <button class="ml-2" aria-label="Sum"><svg class="h-4 w-3.5" viewBox="0 0 14 16"><path d="M12 4V1.500H2l6 6.500-6 6h10.500V11.500" fill="none" stroke="#3e4446" stroke-width="2"/></svg></button>
          <button class="ml-[13px]" aria-label="Function"><svg class="h-2.5 w-3" viewBox="0 0 12 10"><path d="M0 2h12M0 7.500h12" stroke="#3465a4" stroke-width="2.400"/></svg></button>
          <div class="ml-3 h-6 w-px bg-[#d5d3d0]"></div>
          <input aria-label="Input line" value="Print Newspaper AD" class="ml-[3px] h-6 min-w-0 flex-1 rounded border border-[#9a9894] bg-white pl-0.5 outline-none">
          <button aria-label="Expand formula bar" class="ml-1 flex h-[23px] w-[18px] items-center justify-center rounded border border-[#b5b3b0] bg-[#f7f7f6]"><svg class="h-1.5 w-2.5" viewBox="0 0 10 6"><path d="M0 0h10L5 6z" fill="#444"/></svg></button>
        </div>

        <div class="flex min-h-0 flex-1">
          <div class="relative min-w-0 flex-1 overflow-hidden bg-white">
            <table class="w-full table-fixed border-separate border-spacing-0 whitespace-nowrap text-black font-['DejaVu_Sans',sans-serif]
              [&_thead_th]:h-5 [&_thead_th]:border-b [&_thead_th]:border-r [&_thead_th]:border-[#8f8d89] [&_thead_th]:bg-linear-to-b [&_thead_th]:from-[#f8f8f7] [&_thead_th]:from-50% [&_thead_th]:to-[#f1f0ee] [&_thead_th]:to-50% [&_thead_th]:p-0 [&_thead_th]:text-sm [&_thead_th]:leading-[18px] [&_thead_th]:font-normal [&_thead_th]:text-[#4c4c4c] [&_thead_th]:font-['Noto_Sans',sans-serif]
              [&_tbody_tr]:h-[34px]
              [&_tbody_th]:border-b [&_tbody_th]:border-r [&_tbody_th]:border-[#8f8d89] [&_tbody_th]:bg-linear-to-r [&_tbody_th]:from-[#f8f8f7] [&_tbody_th]:from-50% [&_tbody_th]:to-[#f1f0ee] [&_tbody_th]:to-50% [&_tbody_th]:p-0 [&_tbody_th]:text-[13px] [&_tbody_th]:font-normal [&_tbody_th]:text-[#4c4c4c] [&_tbody_th]:font-['Noto_Sans',sans-serif]
              [&_td]:overflow-hidden [&_td]:border-b [&_td]:border-r [&_td]:border-black [&_td]:px-px [&_td]:py-0 [&_td]:text-[21px] [&_td]:leading-[26px]
              [&_td:nth-child(2)]:text-center [&_td:nth-child(4)]:text-center
              [&_td:nth-child(5)]:border-t [&_td:nth-child(5)]:border-b-2 [&_td:nth-child(5)]:border-r-2 [&_td:nth-child(5)]:text-[15px]
              [&_td:nth-child(6)]:border-t [&_td:nth-child(6)]:border-b-2 [&_td:nth-child(6)]:border-l [&_td:nth-child(6)]:border-r-0 [&_td:nth-child(6)]:pl-0 [&_td:nth-child(6)]:text-[15px] [&_td:nth-child(6)]:font-bold [&_td:nth-child(6)]:text-[#f00]">
              <colgroup><col class="w-[41px]"><col class="w-[85px]"><col class="w-[395px]"><col class="w-[128px]"><col class="w-[401px]"><col></colgroup>
              <thead><tr><th></th><th>A</th><th class="border-[#d9683c]! from-[#f6a98c]! to-[#f07746]! font-bold! text-white!">B</th><th>C</th><th>D</th><th></th></tr></thead>
              <tbody>
                <tr class="h-[41px]!"><th>1</th><td>Sr.No</td><td>Activity type</td><td>SAC code</td><td class="bg-[#ddebf7] font-bold">Descriptoin based on SAC code</td><td class="bg-[#ddebf7] pl-[51px]!">Description to be</td></tr>
                <tr><th class="border-[#d9683c]! from-[#f6a98c]! to-[#f07746]! font-bold! text-white!">2</th><td>1</td><td>Print Newspaper AD</td><td>998363</td><td>Sale of advertising space in print media</td><td>Sale of advertising space</td></tr>
                <tr><th>3</th><td>2</td><td>Paper insert</td><td>998361</td><td>Sale of advertising space in print media</td><td>Sale of advertising space</td></tr>
                <tr><th>4</th><td>3</td><td>Digital lead generation</td><td>998361</td><td>Advertising Services</td><td>Advertising Services-Digital</td></tr>
                <tr><th>5</th><td>4</td><td>SMS Activity</td><td>998361</td><td>Advertising Services</td><td>Advertising Services-SMS</td></tr>
                <tr><th>6</th><td>5</td><td>Cinema AD</td><td>998361</td><td>Advertising Services</td><td>Advertising Services-Cinema</td></tr>
                <tr><th>7</th><td>6</td><td class="relative">Demo Display Activity-Road show,Me<svg class="absolute right-0 top-3.5 h-1.5 w-1" viewBox="0 0 4 6"><path d="M0 0l4 3-4 3z" fill="#c00"/></svg></td><td>998361</td><td>Advertising Services</td><td>Advertising Services-Demo</td></tr>
                <tr><th>8</th><td>7</td><td>Events Activity</td><td>998361</td><td>Advertising Services</td><td>Advertising Services-Events</td></tr>
                <tr><th>9</th><td>8</td><td>Radio AD</td><td>998361</td><td>Sale of TV and radio advertising time</td><td>Sale of TV and radio advertising</td></tr>
                <tr><th>10</th><td>9</td><td>BTL Activation</td><td>998361</td><td>Advertising Services</td><td>Advertising Services-BTL</td></tr>
                <tr><th>11</th><td>10</td><td>Manpower Salary Support</td><td>998519</td><td>Other employment &amp; labour supply services n.e.c</td><td>Other employment &amp; labour</td></tr>
                <tr><th>12</th><td>11</td><td>Salesmen Training</td><td>999293</td><td>Commercial training and coaching services</td><td>Commercial training and</td></tr>
                <tr><th>13</th><td>12</td><td>Retail Incentive</td><td>998599</td><td>Other support services n.e.c.</td><td>Other support services</td></tr>
                <tr><th>14</th><td>13</td><td>Institutional Retail Incentive</td><td>998599</td><td>Other support services n.e.c.</td><td>Other support services</td></tr>
                <tr><th>15</th><td>14</td><td>Exchange Retail Incentive</td><td>998599</td><td>Other support services n.e.c.</td><td>Other support services</td></tr>
              </tbody>
            </table>
            <!-- cell cursor -->
            <div class="pointer-events-none absolute left-[125px] top-[60px] h-[35px] w-[396px] border-2 border-black"><span class="absolute -bottom-1 -right-1 size-[5px] bg-black"></span></div>
          </div>
          <!-- vertical scroll bar -->
          <div class="flex w-[7px] shrink-0 flex-col">
            <div class="flex h-[5px] items-center bg-[#b5b3b0] px-px"><div class="h-px w-full bg-black"></div></div>
            <div class="mt-0.5 h-[235px] bg-[#f28e68]"></div>
          </div>
        </div>
        <!-- horizontal scroll bar -->
        <div class="flex h-[7px] shrink-0 items-stretch pl-px pr-[7px]">
          <div class="w-[354px] bg-[#f28e68]"></div>
          <div class="ml-auto flex w-[5px] justify-center bg-[#b5b3b0] py-px"><div class="w-px bg-black"></div></div>
        </div>
        <!-- sheet tabs -->
        <div class="flex h-5 shrink-0 items-center text-xs [&>button]:shrink-0">
          <button class="ml-[13px]" aria-label="First sheet"><svg class="h-2.5 w-2" viewBox="0 0 8 10" fill="#333"><path d="M0 0h1.500v10H0zM8 0v10L2 5z"/></svg></button>
          <button class="ml-3" aria-label="Previous sheet"><svg class="h-2.5 w-1.5" viewBox="0 0 6 10"><path d="M6 0v10L0 5z" fill="#333"/></svg></button>
          <button class="ml-3.5" aria-label="Next sheet"><svg class="h-2.5 w-1.5" viewBox="0 0 6 10"><path d="M0 0v10l6-5z" fill="#aaa"/></svg></button>
          <button class="ml-3" aria-label="Last sheet"><svg class="h-2.5 w-2" viewBox="0 0 8 10" fill="#aaa"><path d="M6.500 0H8v10H6.500zM0 0v10l6-5z"/></svg></button>
          <button class="ml-[17px]" aria-label="Add sheet"><svg class="size-3" viewBox="0 0 12 12"><path d="M6 0v12M0 6h12" stroke="#333" stroke-width="3.600"/></svg></button>
          <div role="tablist" class="ml-2.5 flex h-5 min-w-0 [&>button]:-mr-px [&>button]:h-5 [&>button]:shrink-0 [&>button]:border [&>button]:border-[#8f8d89]">
            <button role="tab" class="w-[95px] bg-[#a9d18e] text-black">Incentive (2)</button>
            <button role="tab" class="w-[95px] bg-[#f8cbad] text-black">Incentive (3)</button>
            <button role="tab" class="w-[70px] bg-[#ffe699] text-black">Activity</button>
            <button role="tab" class="w-[167px]">Sales Figures (repetitive)</button>
            <button role="tab" class="w-[77px]">Audit log</button>
            <button role="tab" class="w-[140px]">Activity bulk upload</button>
            <button role="tab" class="w-[147px]">Incentive bulk upload</button>
            <button role="tab" aria-selected="true" class="w-[142px] border-y-0! bg-white font-bold">Activity &amp; SAC Code</button>
            <button role="tab" class="w-[123px]">Rejection Reason</button>
          </div>
        </div>
      </div>
      <!-- sidebar splitter -->
      <div class="relative mb-0.5 w-[7px] shrink-0 border border-[#aaa8a4]">
        <button aria-label="Hide sidebar" class="absolute -inset-x-px top-[257px] flex h-[73px] items-center justify-center bg-[#8f8b87]"><svg class="h-2 w-[5px]" viewBox="0 0 5 8"><path d="M0 0l5 4-5 4z" fill="#fff"/></svg></button>
      </div>
      <!-- sidebar -->
      <aside class="mb-0.5 flex w-10 shrink-0 flex-col items-center border-y border-[#aaa8a4] [&>button]:flex [&>button]:size-8 [&>button]:shrink-0 [&>button]:items-center [&>button]:justify-center">
        <button aria-label="Sidebar settings" class="mt-[3px]"><svg class="h-2.5 w-2.5" viewBox="0 0 10 10"><path d="M0 1.500h6M0 4h6M0 6.500h6" stroke="#444" stroke-width="1.200"/><path d="M4 7h6L7 10z" fill="#111"/></svg></button>
        <div class="mt-[3px] h-px w-[22px] bg-[#d5d3d0]"></div>
        <button aria-label="Properties" class="mt-[3px] rounded border border-[#b0aeab]"><svg class="size-6" viewBox="0 0 24 24"><path d="M2 2l3 3 2-2-2-2c4-1 6 2 5 5l7 8c4-1 6 2 5 5l-2-2-3 3 2 2c-4 1-6-2-5-5L7 9C4 10 1 7 2 2z" fill="#f2f2f2" stroke="#8b8b8b" stroke-width="1.300"/></svg></button>
        <button aria-label="Styles" class="mt-1"><svg class="size-6" viewBox="0 0 24 24"><path d="M4 2h18v5h-1.500L19 4.500h-4V17l2 1.500h-8L11 17V4.500H7L5.500 7H4z" fill="#555b5e"/><path d="M1 7v15.500h20z" fill="#7ccc4c" stroke="#3f8f1f"/><path d="M5 15v4.500h6z" fill="#f1f0ee" stroke="#3f8f1f"/></svg></button>
        <button aria-label="Gallery" class="mt-0.5"><svg class="size-6" viewBox="0 0 24 24"><path d="M9 5l3-3.500L15 5" fill="none" stroke="#888" stroke-width="1.300"/><rect x="1.500" y="5.500" width="21" height="14" rx="1" fill="#d38e2b" stroke="#7d4d08"/><path d="M4.500 8h15v9h-15z" fill="#4f89bc"/><path d="M4.500 12h15v5h-15z" fill="#f7c13f"/><path d="M14 17v-5l-3-3M14 12l4-3" fill="none" stroke="#222" stroke-width="1.200"/></svg></button>
        <button aria-label="Navigator" class="mt-[3px]"><svg class="size-6" viewBox="0 0 24 24"><circle cx="12" cy="12" r="9.700" fill="#ddd" stroke="#888" stroke-width="1.300"/><circle cx="12" cy="12" r="7.500" fill="#f8f8f8" stroke="#999"/><path d="M7 7l6.500 4-3 3z" fill="#d62929"/><path d="M17 17l-3.500-6-3 3z" fill="#3c66a8"/></svg></button>
        <button aria-label="Functions" class="mt-0.5"><svg class="size-[22px]"><use href="#fx"/></svg></button>
      </aside>
    </div>

    <!-- status bar -->
    <footer class="flex h-[21px] shrink-0 items-center border-t border-[#aaa8a4] text-xs [&>div]:flex [&>div]:h-4 [&>div]:shrink-0 [&>div]:items-center [&>div]:border-r [&>div]:border-[#9a9894]">
      <div class="w-[116px] pl-2.5">Sheet 15 of 17</div>
      <div class="w-[228px]"></div>
      <div class="w-[236px] pl-2">PageStyle_Activity &amp; SAC Code</div>
      <div class="w-[115px] justify-center pl-0.5">English (India)</div>
      <div class="w-[68px]"></div>
      <div class="w-[29px] justify-center"><svg class="h-2.5 w-3.5" viewBox="0 0 14 10"><path d="M0 2h9v6H0z" fill="#888"/><path d="M10 .5h3M11.500 0v10M10 9.500h3" stroke="#777"/></svg></div>
      <div class="w-[29px] justify-center"><svg class="h-3 w-3" viewBox="0 0 12 12"><path d="M.5.500h8v10h-8z" fill="none" stroke="#888"/><path d="M8.500 3.500v6M6 5l5 3M11 5L6 8" stroke="#b01020" stroke-width="1.300"/></svg></div>
      <div class="w-[29px]"></div>
      <div class="min-w-0 flex-1 justify-center pl-0.5">Average: ; Sum: 0</div>
      <div class="w-[143px] gap-[5px] pl-2.5">
        <button aria-label="Zoom out"><svg class="size-2" viewBox="0 0 8 8"><path d="M0 4h8" stroke="#888" stroke-width="1.600"/></svg></button>
        <input type="range" aria-label="Zoom" value="50" class="h-2 w-[98px] appearance-none bg-linear-to-b from-transparent from-40% via-[#999] via-50% to-transparent to-70% [&::-webkit-slider-thumb]:size-2 [&::-webkit-slider-thumb]:appearance-none [&::-webkit-slider-thumb]:rounded-full [&::-webkit-slider-thumb]:border [&::-webkit-slider-thumb]:border-[#777] [&::-webkit-slider-thumb]:bg-white">
        <button aria-label="Zoom in"><svg class="size-2" viewBox="0 0 8 8"><path d="M0 4h8M4 0v8" stroke="#888" stroke-width="1.600"/></svg></button>
      </div>
      <button class="w-12 shrink-0 pl-2 text-left">100%</button>
    </footer>
  </main>
</div>
</body>
</html>
